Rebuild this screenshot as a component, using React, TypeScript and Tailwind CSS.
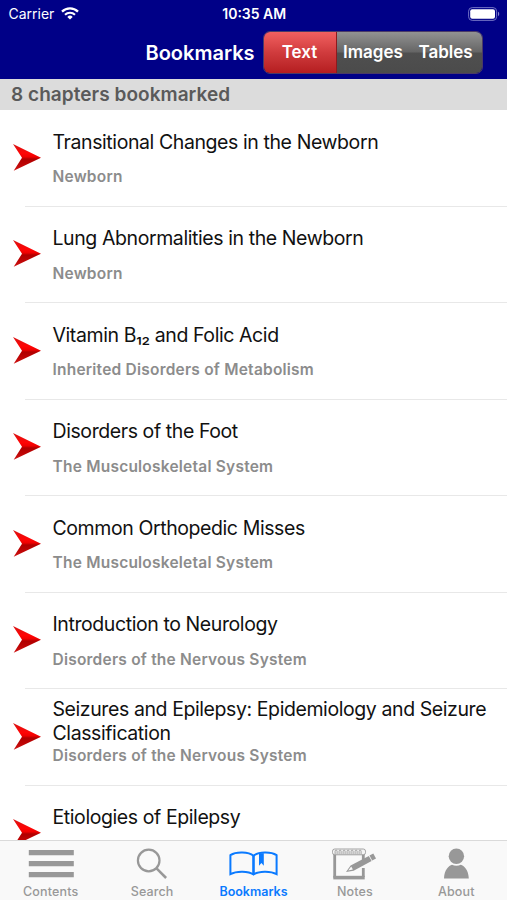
import type { ReactNode } from "react";

type Bookmark = { title: string; section?: string };
type Tab = { label: string; icon: ReactNode; active?: boolean };

const bookmarks: Bookmark[] = [
  { title: "Transitional Changes in the Newborn", section: "Newborn" },
  { title: "Lung Abnormalities in the Newborn", section: "Newborn" },
  {
    title: "Vitamin B₁₂ and Folic Acid",
    section: "Inherited Disorders of Metabolism",
  },
  { title: "Disorders of the Foot", section: "The Musculoskeletal System" },
  { title: "Common Orthopedic Misses", section: "The Musculoskeletal System" },
  {
    title: "Introduction to Neurology",
    section: "Disorders of the Nervous System",
  },
  {
    title: "Seizures and Epilepsy: Epidemiology and Seizure Classification",
    section: "Disorders of the Nervous System",
  },
  { title: "Etiologies of Epilepsy" },
];

function WifiIcon() {
  return (
    <svg width="18" height="13" viewBox="0 0 18 13" fill="none" stroke="#fff">
      <path d="M1 4.6a11.4 11.4 0 0 1 16 0" strokeWidth="2.3" />
      <path d="M4 7.8a7.2 7.2 0 0 1 10 0" strokeWidth="2.1" />
      <path d="M9 12.6 6.3 9.9a3.9 3.9 0 0 1 5.4 0Z" fill="#fff" stroke="none" />
    </svg>
  );
}

function BatteryIcon() {
  return (
    <svg width="32" height="14" viewBox="0 0 32 14">
      <rect x=".6" y=".6" width="28" height="12.8" rx="3.6" fill="none" stroke="#7070c4" strokeWidth="1" />
      <rect x="2.2" y="2.3" width="24.8" height="9.4" rx="2" fill="#fff" />
      <path d="M30 4.8c1.6.5 1.6 3.9 0 4.4Z" fill="#8585cf" />
    </svg>
  );
}

function ArrowIcon() {
  return (
    <svg width="29" height="28" viewBox="0 0 29 28" className="shrink-0">
      <defs>
        <linearGradient id="arrowFill" x1="0" y1="0" x2="0" y2="1">
          <stop offset="0" stopColor="#d81414" />
          <stop offset=".35" stopColor="#ff0505" />
          <stop offset=".48" stopColor="#f00000" />
          <stop offset=".56" stopColor="#b00000" />
          <stop offset=".75" stopColor="#bd0404" />
          <stop offset="1" stopColor="#cf1515" />
        </linearGradient>
      </defs>
      <path d="M0 0 28 13.7.7 26.8 9 13.7Z" fill="url(#arrowFill)" />
    </svg>
  );
}

const tabs: Tab[] = [
  {
    label: "Contents",
    icon: (
      <svg width="46" height="28" viewBox="0 0 46 28" fill="#989898">
        <path d="M.8 0h45v5.2h-45zM.8 11h45v5.2h-45zM.8 22h45v5.2h-45z" />
      </svg>
    ),
  },
  {
    label: "Search",
    icon: (
      <svg width="32" height="32" viewBox="0 0 32 32" fill="none" stroke="#989898">
        <circle cx="12.7" cy="12.5" r="10.8" strokeWidth="2.2" />
        <path d="m20.3 20.2 9.8 9.8" strokeWidth="2.5" />
      </svg>
    ),
  },
  {
    label: "Bookmarks",
    active: true,
    icon: (
      <svg width="50" height="26" viewBox="0 0 50 26" fill="none" stroke="#0a7aff" strokeWidth="2">
        <path d="M24.5 4.8C19.5.9 7.5.3 1.4 4.2v18.9c6.1-3.4 18.1-3.2 23.1.4 5-3.6 17-3.8 23.1-.4V4.2C41.5.3 29.5.9 24.5 4.8Z" />
        <path d="M24.5 4v19.6" strokeWidth="2.6" />
        <path d="M30 2.2h4.8v12.5l-2.4-2.8-2.4 2.8Z" fill="#0a7aff" stroke="none" />
      </svg>
    ),
  },
  {
    label: "Notes",
    icon: (
      <svg width="46" height="32" viewBox="0 0 46 32" fill="none" stroke="#989898">
        <path d="M2.7 6v23.8M31.3 6v6M31.3 20v9" strokeWidth="2.8" />
        <path d="M1.3 29.6h31.4" strokeWidth="3.6" />
        <rect x=".5" y="1" width="33" height="5.8" rx="2.2" fill="#f4f4f4" strokeWidth=".9" />
        <path d="M3.1 6.4V3.2a1 1 0 0 1 2 0v3.2M7.1 6.4V3.2a1 1 0 0 1 2 0v3.2M11.1 6.4V3.2a1 1 0 0 1 2 0v3.2M15.1 6.4V3.2a1 1 0 0 1 2 0v3.2M19.1 6.4V3.2a1 1 0 0 1 2 0v3.2M23.1 6.4V3.2a1 1 0 0 1 2 0v3.2M27.1 6.4V3.2a1 1 0 0 1 2 0v3.2" strokeWidth=".9" />
        <path d="m14 24 4.6-6.6L36.8 8l2.8 5-18 9.7Z" fill="#989898" stroke="none" />
        <path d="m16.2 22.4 3-3.8 1.7 3Z" fill="#f9f9f9" stroke="none" />
        <path d="m37.5 7.6 3.8-2.1 2.7 4.9-3.8 2.2Z" fill="#989898" stroke="none" />
      </svg>
    ),
  },
  {
    label: "About",
    icon: (
      <svg width="26" height="31" viewBox="0 0 26 31" fill="#989898">
        <circle cx="12.4" cy="8.2" r="7.7" />
        <path d="M0 30.4C.2 22 4.9 17.4 8 16.7c2.7 1.4 6.1 1.4 8.8 0 3.1.7 7.8 5.3 8 13.7Z" />
      </svg>
    ),
  },
];

export default function App() {
  return (
    <div className="flex h-[900px] w-[507px] flex-col overflow-hidden bg-white font-['Inter','Liberation_Sans',sans-serif]">
      <header className="h-[79px] shrink-0 bg-[#000087] text-white">
        <div className="grid h-[27px] grid-cols-3 items-center pl-[8.5px] pr-[7px] text-[14px]">
          <div className="flex items-center gap-[7px]">
            <span>Carrier</span>
            <WifiIcon />
          </div>
          <span className="text-center font-semibold whitespace-nowrap">10:35 AM</span>
          <div className="flex justify-end">
            <BatteryIcon />
          </div>
        </div>
        <div className="flex items-center pl-[145.5px] pt-[4px]">
          <h1 className="w-[117px] text-[20px] font-semibold whitespace-nowrap">Bookmarks</h1>
          <div className="flex h-[43px] w-[220px] overflow-hidden rounded-[7px] border border-[#4a3a66] text-[17px] font-semibold">
            <button className="w-[73px] border-r border-[#8d1a1e] bg-linear-to-b from-[#f26060] via-[#d03b3d] via-50% to-[#b51d20] pt-px">
              Text
            </button>
            <div className="flex flex-1 bg-[linear-gradient(#929292,#666_48%,#4f4f4f_52%,#4b4b4b)] pt-px">
              <button className="w-[73px]">Images</button>
              <button className="flex-1">Tables</button>
            </div>
          </div>
        </div>
      </header>

      <div className="flex h-[31px] shrink-0 items-center bg-[#dcdcdc] pt-[2px] pl-[11px] text-[19px] font-semibold tracking-[0.05px] text-[#5a5a5a]">
        8 chapters bookmarked
      </div>

      <ul className="min-h-0 flex-1 overflow-hidden">
        {bookmarks.map((b) => (
          <li key={b.title} className="flex h-[96.5px] pl-[13px]">
            <div className="w-[12px] pt-[33.5px]">
              <ArrowIcon />
            </div>
            <div className="flex-1 border-b border-[#e8e8e8] pl-[27.5px] pt-[9px]">
              <h2 className="flex h-[47px] items-center text-[19.5px] leading-[23.5px] tracking-[-0.41px] text-[#111]">
                <span className="w-[440px]">{b.title}</span>
              </h2>
              {b.section && (
                <p className="text-[15.5px] leading-[21px] font-semibold tracking-[0.22px] text-[#8c8c8c]">
                  {b.section}
                </p>
              )}
            </div>
          </li>
        ))}
      </ul>

      <nav className="grid h-[60px] shrink-0 grid-cols-5 border-t border-[#dadada] bg-[#f9f9f9]">
        {tabs.map((t) => (
          <button
            key={t.label}
            className={
              t.active
                ? "flex flex-col items-center text-[12.5px] font-semibold text-[#0a7aff]"
                : "flex flex-col items-center text-[12.5px] font-medium tracking-[0.15px] text-[#989898]"
            }
          >
            <span className="flex h-[43px] items-center pt-[2px] pl-[0.5px]">{t.icon}</span>
            <span className="leading-[16px]">{t.label}</span>
          </button>
        ))}
      </nav>
    </div>
  );
}
